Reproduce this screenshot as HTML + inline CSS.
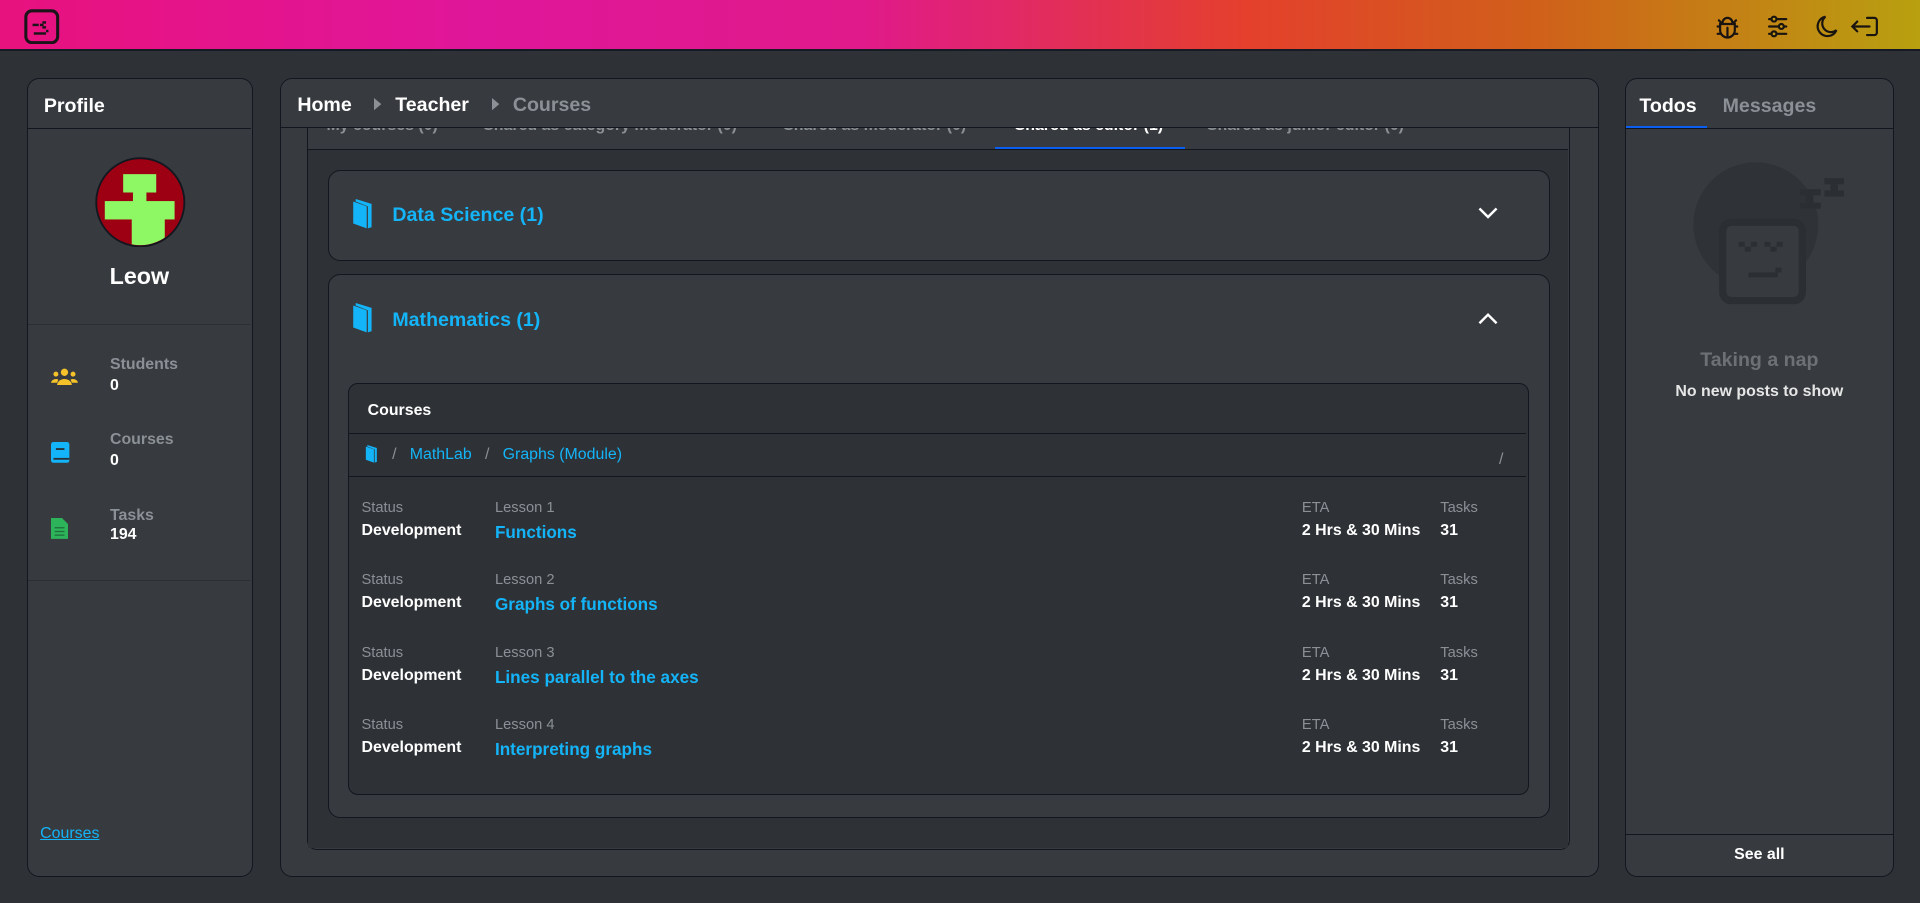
<!DOCTYPE html>
<html><head><meta charset="utf-8"><style>
*{box-sizing:border-box;margin:0;padding:0}
html,body{width:1920px;height:903px;overflow:hidden;background:#2e3236}
#w{zoom:1.22449;width:1568px;height:737px;position:relative;font-family:"Liberation Sans",sans-serif;color:#fff;background:#2e3236}
.a{position:absolute}
.hdr{left:0;top:0;width:1568px;height:42px;background:linear-gradient(90deg,#e8127e 0%,#e0169a 25%,#e01a8a 45%,#e4402c 65%,#d0601a 80%,#b8a010 100%);border-bottom:2px solid #151a24}
.pan{background:#373b3f;border:1.5px solid #12161f;border-radius:10px}
.b{font-weight:bold}
.g{color:#8b9096}
.bl{color:#14b4f8}
.lbl{font-size:12px;color:#8b9096}
.val{font-size:13px;font-weight:bold;color:#fff}
</style></head><body><div id="w">
<div class="a hdr">
 <svg class="a" style="left:20px;top:7px" width="29" height="29" viewBox="0 0 29 29"><rect x="1.5" y="1.5" width="26" height="26" rx="5" fill="none" stroke="#1a1418" stroke-width="2.5"/><rect x="7" y="12" width="5" height="2" fill="#1a1418"/><rect x="15" y="10" width="3" height="2" fill="#1a1418"/><rect x="13" y="12" width="3" height="2" fill="#1a1418"/><rect x="15" y="14" width="3" height="2" fill="#1a1418"/><rect x="8" y="19" width="10" height="2" fill="#1a1418"/><rect x="18" y="17" width="2" height="2" fill="#1a1418"/></svg>
 <svg class="a" style="left:1400px;top:11px" width="140" height="22" viewBox="0 0 140 22" fill="none" stroke="#1a1410" stroke-width="1.8" stroke-linecap="round">
  <path d="M7 8a4 4 0 0 1 8 0M5 9h12v5a6 6 0 0 1-12 0zM11 12v7M3 11h2M17 11h2M3 17h2M17 17h2M4 6l2 2M18 6l-2 2"/>
  <path d="M45 5h14M45 11h14M45 17h14"/><circle cx="49" cy="5" r="2" fill="#c49a10"/><circle cx="55" cy="11" r="2" fill="#c49a10"/><circle cx="49" cy="17" r="2" fill="#c49a10"/>
  <path d="M91 3a8 8 0 1 0 9 11a7 7 0 0 1-9-11z"/>
  <path d="M125 4h6a2 2 0 0 1 2 2v10a2 2 0 0 1-2 2h-6M127 11h-14M117 7l-4 4 4 4"/>
 </svg>
</div>

<!-- Profile -->
<div class="a pan" style="left:22px;top:64px;width:185px;height:652px">
 <div class="a b" style="left:13px;top:13px;font-size:16px">Profile</div>
 <div class="a" style="left:0;top:40px;width:182px;border-top:1.5px solid #12161f"></div>
 <svg class="a" style="left:55px;top:63px" width="74" height="74" viewBox="0 0 74 74"><defs><clipPath id="cc"><circle cx="37" cy="37" r="35"/></clipPath></defs><circle cx="37" cy="37" r="36" fill="#9c0012" stroke="#12161f" stroke-width="1.5"/><g fill="#8ef764" clip-path="url(#cc)"><rect x="23" y="14" width="27" height="15"/><rect x="31" y="28" width="11" height="9"/><rect x="8" y="36" width="57" height="15"/><rect x="30" y="50" width="27" height="26"/></g></svg>
 <div class="a b" style="left:0;width:182px;text-align:center;top:150px;font-size:19px">Leow</div>
 <div class="a" style="left:0;top:200px;width:182px;border-top:1px solid #2b2f33"></div>
 <svg class="a" style="left:19px;top:236px" width="22" height="14" viewBox="0 0 22 14" fill="#f6c22a"><circle cx="11" cy="3.5" r="3"/><circle cx="4" cy="5" r="2"/><circle cx="18" cy="5" r="2"/><path d="M5 14a6 5 0 0 1 12 0zM0 12a4 3.5 0 0 1 6-2.5L5 12zM22 12a4 3.5 0 0 0-6-2.5L17 12z"/></svg>
 <div class="a b g" style="left:67px;top:226px;font-size:13px">Students</div><div class="a val" style="left:67px;top:243px">0</div>
 <svg class="a" style="left:19px;top:296px" width="16" height="18" viewBox="0 0 16 18"><rect x="0" y="0" width="15" height="17" rx="2" fill="#14b4f8"/><rect x="4" y="5" width="7" height="1.5" fill="#2a3036"/><rect x="2" y="13" width="13" height="1.5" fill="#2a3036"/></svg>
 <div class="a b g" style="left:67px;top:287px;font-size:13px">Courses</div><div class="a val" style="left:67px;top:304px">0</div>
 <svg class="a" style="left:19px;top:358px" width="14" height="17" viewBox="0 0 14 17"><path d="M0 0h9l5 5v12H0z" fill="#2db45a"/><path d="M3 8h8M3 11h8M3 14h8" stroke="#1f6b3a" stroke-width="1"/></svg>
 <div class="a b g" style="left:67px;top:349px;font-size:13px">Tasks</div><div class="a val" style="left:67px;top:365px">194</div>
 <div class="a" style="left:0;top:409px;width:182px;border-top:1px solid #2b2f33"></div>
 <div class="a bl" style="left:10px;top:609px;font-size:13px;text-decoration:underline">Courses</div>
</div>

<!-- Main -->
<div class="a pan" style="left:229px;top:64px;width:1077px;height:652px;overflow:hidden">
 <div class="a" style="left:21px;top:40px;width:1031px;height:589px;border:1.5px solid #12161f;border-top:none;border-radius:0 0 8px 8px;background:#373b3f">
  <div class="a" style="left:0;top:0;width:1029px;height:18px;overflow:hidden;font-size:13px;color:#8b9096;font-weight:bold">
   <span class="a" style="left:15px;top:-9px">My courses (0)</span><span class="a" style="left:143px;top:-9px">Shared as category moderator (0)</span><span class="a" style="left:388px;top:-9px">Shared as moderator (0)</span><span class="a" style="left:577px;top:-9px;color:#fff">Shared as editor (1)</span><span class="a" style="left:734px;top:-9px">Shared as junior editor (0)</span>
   <div class="a" style="left:561px;top:15px;width:155px;height:2px;background:#0a5ef0"></div>
  </div>
  <div class="a" style="left:0;top:17px;width:1029px;border-top:1.5px solid #12161f"></div>
  <div class="a" style="left:0;top:18px;width:1029px;height:570px;background:#2e3236"></div>
  <div class="a pan" style="left:16px;top:34px;width:998px;height:74px">
   <svg class="a" style="left:19px;top:23px" width="17" height="25" viewBox="0 0 17 25"><path d="M1 2l11 4v18L1 20z" fill="#14b4f8"/><path d="M3 0l13 4v19l-3 1V6L3 2z" fill="#14b4f8"/></svg>
   <div class="a b bl" style="left:52px;top:27px;font-size:16px">Data Science (1)</div>
   <svg class="a" style="left:938px;top:29px" width="18" height="12" viewBox="0 0 18 12"><path d="M2 2l7 7 7-7" fill="none" stroke="#fff" stroke-width="2"/></svg>
  </div>
  <div class="a pan" style="left:16px;top:119px;width:998px;height:444px">
   <svg class="a" style="left:19px;top:23px" width="17" height="25" viewBox="0 0 17 25"><path d="M1 2l11 4v18L1 20z" fill="#14b4f8"/><path d="M3 0l13 4v19l-3 1V6L3 2z" fill="#14b4f8"/></svg>
   <div class="a b bl" style="left:52px;top:28px;font-size:16px">Mathematics (1)</div>
   <svg class="a" style="left:938px;top:29px" width="18" height="12" viewBox="0 0 18 12"><path d="M2 10l7-7 7 7" fill="none" stroke="#fff" stroke-width="2"/></svg>
   <div class="a" style="left:16px;top:88px;width:964px;height:337px;background:#2e3236;border:1.5px solid #12161f;border-radius:8px">
    <div class="a b" style="left:15px;top:15px;font-size:13px">Courses</div>
    <div class="a" style="left:0;top:40px;width:961px;border-top:1.5px solid #12161f"></div>
    <svg class="a" style="left:12px;top:50px" width="12" height="15" viewBox="0 0 17 25"><path d="M1 2l11 4v18L1 20z" fill="#14b4f8"/><path d="M3 0l13 4v19l-3 1V6L3 2z" fill="#14b4f8"/></svg>
    <div class="a" style="left:35px;top:51px;font-size:13px"><span class="g">/</span>&nbsp;&nbsp;&nbsp;<span class="bl">MathLab</span>&nbsp;&nbsp;&nbsp;<span class="g">/</span>&nbsp;&nbsp;&nbsp;<span class="bl">Graphs (Module)</span></div>
    <div class="a g" style="left:939px;top:55px;font-size:13px">/</div>
    <div class="a" style="left:0;top:75px;width:961px;border-top:1.5px solid #12161f"></div>
    <div class="a" style="left:0;top:90px;width:961px">
     <div class="a" style="top:0;left:0;width:961px;height:50px">
      <div class="a lbl" style="left:10px;top:5px">Status</div><div class="a val" style="left:10px;top:23px">Development</div>
      <div class="a lbl" style="left:119px;top:5px">Lesson 1</div><div class="a b bl" style="left:119px;top:23px;font-size:14px">Functions</div>
      <div class="a lbl" style="left:778px;top:5px">ETA</div><div class="a val" style="left:778px;top:23px">2 Hrs &amp; 30 Mins</div>
      <div class="a lbl" style="left:891px;top:5px">Tasks</div><div class="a val" style="left:891px;top:23px">31</div>
     </div>
     <div class="a" style="top:60px;left:0;width:961px;height:50px">
      <div class="a lbl" style="left:10px;top:4px">Status</div><div class="a val" style="left:10px;top:22px">Development</div>
      <div class="a lbl" style="left:119px;top:4px">Lesson 2</div><div class="a b bl" style="left:119px;top:22px;font-size:14px">Graphs of functions</div>
      <div class="a lbl" style="left:778px;top:4px">ETA</div><div class="a val" style="left:778px;top:22px">2 Hrs &amp; 30 Mins</div>
      <div class="a lbl" style="left:891px;top:4px">Tasks</div><div class="a val" style="left:891px;top:22px">31</div>
     </div>
     <div class="a" style="top:119px;left:0;width:961px;height:50px">
      <div class="a lbl" style="left:10px;top:4px">Status</div><div class="a val" style="left:10px;top:22px">Development</div>
      <div class="a lbl" style="left:119px;top:4px">Lesson 3</div><div class="a b bl" style="left:119px;top:22px;font-size:14px">Lines parallel to the axes</div>
      <div class="a lbl" style="left:778px;top:4px">ETA</div><div class="a val" style="left:778px;top:22px">2 Hrs &amp; 30 Mins</div>
      <div class="a lbl" style="left:891px;top:4px">Tasks</div><div class="a val" style="left:891px;top:22px">31</div>
     </div>
     <div class="a" style="top:178px;left:0;width:961px;height:50px">
      <div class="a lbl" style="left:10px;top:4px">Status</div><div class="a val" style="left:10px;top:22px">Development</div>
      <div class="a lbl" style="left:119px;top:4px">Lesson 4</div><div class="a b bl" style="left:119px;top:22px;font-size:14px">Interpreting graphs</div>
      <div class="a lbl" style="left:778px;top:4px">ETA</div><div class="a val" style="left:778px;top:22px">2 Hrs &amp; 30 Mins</div>
      <div class="a lbl" style="left:891px;top:4px">Tasks</div><div class="a val" style="left:891px;top:22px">31</div>
     </div>
    </div>
   </div>
  </div>
 </div>
 <div class="a" style="left:0;top:0;width:1075px;height:40px;background:#373b3f;border-bottom:1.5px solid #12161f">
  <div class="a b" style="left:13px;top:12px;font-size:16px">Home</div>
  <svg class="a" style="left:76px;top:15px" width="6" height="10"><path d="M0 0l6 5-6 5z" fill="#8b9096"/></svg>
  <div class="a b" style="left:93px;top:12px;font-size:16px">Teacher</div>
  <svg class="a" style="left:172px;top:15px" width="6" height="10"><path d="M0 0l6 5-6 5z" fill="#8b9096"/></svg>
  <div class="a b g" style="left:189px;top:12px;font-size:16px">Courses</div>
 </div>
</div>

<!-- Right -->
<div class="a pan" style="left:1327px;top:64px;width:220px;height:652px;overflow:hidden">
 <div class="a b" style="left:11px;top:13px;font-size:16px">Todos</div>
 <div class="a b g" style="left:79px;top:13px;font-size:16px">Messages</div>
 <div class="a" style="left:0;top:40px;width:218px;border-top:1.5px solid #12161f"></div>
 <div class="a" style="left:0;top:38px;width:66px;height:2px;background:#0a5ef0"></div>
 <svg class="a" style="left:0;top:0" width="218" height="200" viewBox="0 0 218 200">
  <circle cx="106" cy="119" r="51" fill="#2f3337"/>
  <rect x="79" y="117" width="65" height="64" rx="7" fill="#373b3f" stroke="#2b2f33" stroke-width="6"/>
  <g fill="#2b2f33">
   <rect x="162" y="81" width="16" height="5"/><rect x="167" y="86" width="6" height="5"/><rect x="162" y="91" width="16" height="5"/>
   <rect x="142" y="90" width="17" height="5"/><rect x="147" y="95" width="6" height="6"/><rect x="142" y="101" width="17" height="5"/>
   <rect x="92" y="133" width="5" height="4"/><rect x="97" y="137" width="5" height="4"/><rect x="102" y="133" width="5" height="4"/>
   <rect x="113" y="133" width="5" height="4"/><rect x="118" y="137" width="5" height="4"/><rect x="123" y="133" width="5" height="4"/>
   <rect x="100" y="158" width="24" height="4"/><rect x="122" y="154" width="5" height="4"/>
  </g>
 </svg>
 <div class="a b" style="left:0;width:218px;text-align:center;top:220px;font-size:16px;color:#6d7175">Taking a nap</div>
 <div class="a b" style="left:0;width:218px;text-align:center;top:248px;font-size:13px;color:#e6e6e6">No new posts to show</div>
 <div class="a" style="left:0;top:616px;width:218px;border-top:1.5px solid #12161f"></div>
 <div class="a b" style="left:0;width:218px;text-align:center;top:626px;font-size:13px">See all</div>
</div>
</div></body></html>
